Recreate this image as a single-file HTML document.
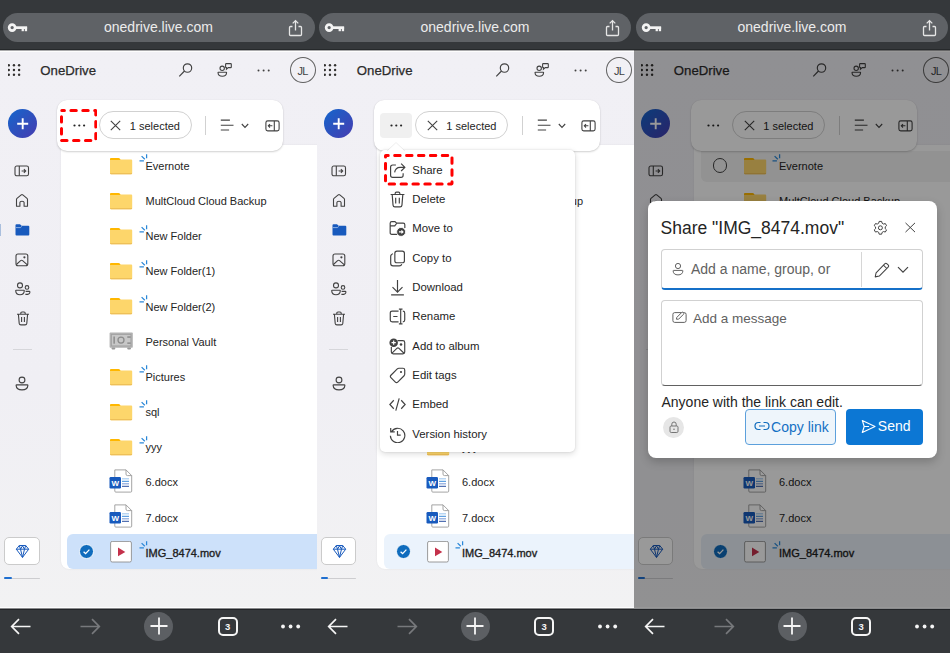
<!DOCTYPE html><html><head><meta charset="utf-8"><style>
*{margin:0;padding:0;box-sizing:border-box}
html,body{width:950px;height:653px;overflow:hidden;background:#35383b}
body{position:relative;font-family:"Liberation Sans",sans-serif;}
.abs{position:absolute}
.panel{position:absolute;top:0;width:317px;height:653px;overflow:hidden}
.top{position:absolute;left:0;top:0;width:317px;height:50px;background:#35383b}
.pill{position:absolute;left:2.5px;top:12.5px;width:312px;height:29.5px;border-radius:15px;background:#5f6266}
.pill .abs{}
.url{position:absolute;left:101.5px;top:6.5px;font-size:14px;color:#ececec;white-space:nowrap;letter-spacing:0}
.pill svg{margin-top:-12.5px;margin-left:-2.5px}
.page{position:absolute;left:0;top:50px;width:317px;height:558px;background:linear-gradient(#f1f0f5,#f0eff4 60%,#f2f2f3);overflow:hidden}
.inner{position:absolute;left:0;top:-50px;width:317px;height:653px}
.bot{position:absolute;left:0;top:608px;width:317px;height:45px;background:#35383b}
.od{left:40.3px;top:62.6px;font-size:13.2px;color:#2b2b2b;-webkit-text-stroke:0.25px #2b2b2b;white-space:nowrap}
.avatar{left:289.6px;top:56.6px;width:26.3px;height:26.4px;border:1.3px solid #616161;border-radius:50%;font-size:11px;line-height:26px;text-align:center;color:#424242;letter-spacing:-0.9px;text-indent:-0.6px}
.fab{left:7.5px;top:108.9px;width:29.4px;height:29.4px;border-radius:50%;background:linear-gradient(135deg,#1466cc,#473cb0)}
.fab svg{display:block}
.diamond{left:4.2px;top:537.3px;width:35.8px;height:27.3px;border:1.2px solid #cbcbcb;border-radius:5px;background:#fff}
.diamond svg{position:absolute;left:-1px;top:-1px}
.listcard{left:60.8px;top:145px;width:270px;height:423.5px;background:#fff;border-radius:0 0 0 8px;box-shadow:0 0 2px rgba(0,0,0,0.08)}
.selrow{left:67px;top:534px;width:260px;height:34.5px;background:#cde1fa;border-radius:6px 0 0 6px}
.check{left:79px;top:544px}
.check svg{display:block}
.rowtxt{left:145.5px;font-size:11px;color:#242424;white-space:nowrap;line-height:16px}
.tbcard{left:57.2px;top:99.6px;width:226.2px;height:51.8px;background:#fff;border-radius:10px;box-shadow:0 1px 2px rgba(0,0,0,0.18),0 0 1px rgba(0,0,0,0.1)}
.selpill{left:98.8px;top:111.3px;width:93px;height:28px;border:1px solid #d1d1d1;border-radius:14px;background:#fff}
.seltxt{left:129.8px;top:119.6px;font-size:11px;color:#242424;white-space:nowrap;line-height:13px}
.menu{left:63px;top:150px;width:195px;height:301.5px;background:#fff;border-radius:5px;box-shadow:0 2px 6px rgba(0,0,0,0.14),0 0 2px rgba(0,0,0,0.12)}
.mtxt{left:95.8px;font-size:11.4px;color:#242424;white-space:nowrap;line-height:16px}
.tabs{left:217.8px;top:9px;width:19.8px;height:19px;border:2px solid #f5f5f5;border-radius:5px;color:#f5f5f5;font-size:9.5px;font-weight:bold;line-height:15px;text-align:center}
.overlay{left:0;top:0;width:317px;height:558px;background:rgba(0,0,0,0.4)}
.dlg{left:14px;top:151px;width:289px;height:256.5px;background:#fff;border-radius:8px;box-shadow:0 4px 10px rgba(0,0,0,0.2)}
.dtitle{left:13px;top:17px;font-size:17.5px;color:#242424;white-space:nowrap}
.dinput{left:13.5px;top:47.8px;width:261.5px;height:41px;border:1px solid #d1d1d1;border-bottom:2px solid #1570c8;border-radius:4px}
.dph{color:#616161;white-space:nowrap}
.dmsg{left:13px;top:98.5px;width:262px;height:86px;border:1px solid #d1d1d1;border-bottom:1px solid #616161;border-radius:4px}
.copybtn{left:97px;top:208px;width:91px;height:35.5px;border:1.2px solid #5ca0dc;border-radius:4px;background:#eef5fb}
.sendbtn{left:198px;top:208px;width:77.5px;height:35.5px;border-radius:4px;background:#0c77d4}
</style></head><body><div class="panel" style="left:0px"><div class="top"><div class="pill"><svg class="abs" style="left:6px;top:21px" width="24" height="14" viewBox="0 0 24 14">
<circle cx="6.15" cy="6.6" r="3" fill="none" stroke="#f4f4f4" stroke-width="2.7"/>
<rect x="8.8" y="5.3" width="12.3" height="2.7" fill="#f4f4f4"/>
<rect x="15.6" y="6" width="2.3" height="4.2" fill="#f4f4f4"/>
<rect x="18.8" y="6" width="2.3" height="4.2" fill="#f4f4f4"/>
</svg><div class="url">onedrive.live.com</div><svg class="abs" style="left:287px;top:19px" width="17" height="18" viewBox="0 0 17 18">
<path d="M5.5 7.5H3.5Q2.5 7.5 2.5 8.5V15.5Q2.5 16.5 3.5 16.5H13.5Q14.5 16.5 14.5 15.5V8.5Q14.5 7.5 13.5 7.5H11.5" fill="none" stroke="#e6e6e6" stroke-width="1.3"/>
<path d="M8.5 11.5V1.8M5.7 4.4L8.5 1.6L11.3 4.4" fill="none" stroke="#e6e6e6" stroke-width="1.3"/>
</svg></div></div><div class="page"><div class="inner"><svg class="abs" style="left:7.6px;top:63.5px" width="13" height="13" viewBox="0 0 13 13"><circle cx="0.80" cy="1.20" r="1.2" fill="#323130"/><circle cx="5.95" cy="1.20" r="1.2" fill="#323130"/><circle cx="11.10" cy="1.20" r="1.2" fill="#323130"/><circle cx="0.80" cy="6.00" r="1.2" fill="#323130"/><circle cx="5.95" cy="6.00" r="1.2" fill="#323130"/><circle cx="11.10" cy="6.00" r="1.2" fill="#323130"/><circle cx="0.80" cy="10.80" r="1.2" fill="#323130"/><circle cx="5.95" cy="10.80" r="1.2" fill="#323130"/><circle cx="11.10" cy="10.80" r="1.2" fill="#323130"/></svg>
<div class="abs od">OneDrive</div>
<svg class="abs" style="left:178px;top:62px" width="16" height="16" viewBox="0 0 16 16"><circle cx="9.5" cy="6" r="4.2" fill="none" stroke="#424242" stroke-width="1.15"/><path d="M6.5 9L1.3 14.3" stroke="#424242" stroke-width="1.2"/></svg>
<svg class="abs" style="left:217px;top:62px" width="16" height="16" viewBox="0 0 16 16"><circle cx="5.2" cy="6.3" r="2.2" fill="none" stroke="#424242" stroke-width="1.1"/><path d="M1.3 10.2H9.3Q9.6 10.2 9.6 10.5Q9.4 14.3 5.3 14.3Q1.2 14.3 1 10.5Q1 10.2 1.3 10.2Z" fill="none" stroke="#424242" stroke-width="1.1"/><path d="M9.3 1.6H13.6Q14.3 1.6 14.3 2.3V4.9Q14.3 5.6 13.6 5.6H11.2L9.4 7.3V5.6Q8.6 5.6 8.6 4.9V2.3Q8.6 1.6 9.3 1.6Z" fill="none" stroke="#424242" stroke-width="1.1"/></svg>
<svg class="abs" style="left:257.3px;top:69px" width="14" height="3" viewBox="0 0 14 3"><circle cx="1.5" cy="1.5" r="1" fill="#424242"/><circle cx="6.6" cy="1.5" r="1" fill="#424242"/><circle cx="11.7" cy="1.5" r="1" fill="#424242"/></svg>
<div class="abs avatar">JL</div><div class="abs fab"><svg width="29.4" height="29.4" viewBox="0 0 29.4 29.4"><path d="M14.7 9.2V20.2M9.2 14.7H20.2" stroke="#fff" stroke-width="1.9"/></svg></div>
<svg class="abs" style="left:14px;top:165px" width="16" height="12" viewBox="0 0 16 12"><rect x="1" y="1" width="13.5" height="9.8" rx="1.8" fill="none" stroke="#424242" stroke-width="1.1"/><path d="M5.3 1V10.8" stroke="#424242" stroke-width="1.1"/><path d="M7.6 6H11.6M9.9 4.2L11.7 6L9.9 7.8" fill="none" stroke="#424242" stroke-width="1.1"/></svg>
<svg class="abs" style="left:15px;top:192.5px" width="14" height="15" viewBox="0 0 14 15"><path d="M1.5 13.3V6.6Q1.5 5.9 2 5.4L6.2 1.9Q7 1.3 7.8 1.9L12 5.4Q12.5 5.9 12.5 6.6V13.3H9.1V9.6Q9.1 8.3 7 8.3Q4.9 8.3 4.9 9.6V13.3Z" fill="none" stroke="#424242" stroke-width="1.1" stroke-linejoin="round"/></svg>
<svg class="abs" style="left:15px;top:224px" width="15" height="12" viewBox="0 0 15 12"><path d="M0.5 1.3Q0.5 0.3 1.5 0.3H5L6.6 1.8H13.3Q14.3 1.8 14.3 2.8V10.4Q14.3 11.4 13.3 11.4H1.5Q0.5 11.4 0.5 10.4Z" fill="#185abd"/><path d="M0.8 3.6H5.4L6.8 2.4" stroke="#a8c5ef" stroke-width="0.8" fill="none"/></svg>
<svg class="abs" style="left:15px;top:253px" width="14" height="14" viewBox="0 0 14 14"><rect x="1" y="1" width="11.8" height="11.8" rx="2" fill="none" stroke="#424242" stroke-width="1.1"/><path d="M1.4 11.5L5.6 7.6Q6.6 6.8 7.6 7.6L12.4 11.8" fill="none" stroke="#424242" stroke-width="1.1"/><circle cx="9.4" cy="4.3" r="1.1" fill="#424242"/></svg>
<svg class="abs" style="left:14.5px;top:282px" width="16" height="14" viewBox="0 0 16 14"><circle cx="5" cy="3.4" r="2.5" fill="none" stroke="#424242" stroke-width="1.1"/><path d="M1.1 8.3H8.9Q9.3 8.3 9.3 8.7Q9.1 12.7 5 12.7Q0.9 12.7 0.7 8.7Q0.7 8.3 1.1 8.3Z" fill="none" stroke="#424242" stroke-width="1.1"/><circle cx="12" cy="5.4" r="1.8" fill="none" stroke="#424242" stroke-width="1.1"/><path d="M10.4 12.4Q14.8 12.6 14.9 10.2Q14.9 9.4 14.2 9.4H10.6" fill="none" stroke="#424242" stroke-width="1.1"/></svg>
<svg class="abs" style="left:15.5px;top:310.5px" width="14" height="15" viewBox="0 0 14 15"><path d="M1 3.3H13M4.8 3.3V2.2Q4.8 1 6 1H8Q9.2 1 9.2 2.2V3.3M2.4 3.3L3.2 12.4Q3.4 13.9 4.9 13.9H9.1Q10.6 13.9 10.8 12.4L11.6 3.3M5.6 6V11M8.4 6V11" fill="none" stroke="#424242" stroke-width="1.1"/></svg>
<div class="abs" style="left:12.5px;top:348.5px;width:19px;height:1px;background:#d6d6da"></div>
<svg class="abs" style="left:15px;top:376px" width="14" height="15" viewBox="0 0 14 15"><circle cx="7" cy="4" r="2.9" fill="none" stroke="#424242" stroke-width="1.1"/><path d="M1.6 8.9H12.4Q12.9 8.9 12.9 9.4Q12.6 13.9 7 13.9Q1.4 13.9 1.1 9.4Q1.1 8.9 1.6 8.9Z" fill="none" stroke="#424242" stroke-width="1.1"/></svg>
<div class="abs diamond"></div>
<svg class="abs" style="left:15px;top:544px" width="15" height="15" viewBox="0 0 15 15"><path d="M4.3 1.5H10.7L13.7 5.2L7.5 13.4L1.3 5.2Z M1.3 5.2H13.7 M5.5 5.2L7.5 13.4L9.5 5.2 M4.3 1.5L5.5 5.2L7.5 1.8L9.5 5.2L10.7 1.5" fill="none" stroke="#185abd" stroke-width="1" stroke-linejoin="round"/></svg>
<div class="abs" style="left:4.2px;top:577.7px;width:35.8px;height:1.4px;background:#cdcdd0;border-radius:1px"></div>
<div class="abs" style="left:4.2px;top:577.4px;width:7.6px;height:2px;background:#1f6fd0;border-radius:1px"></div><div class="abs listcard"></div>
<div class="abs selrow"></div>
<div class="abs check"><svg width="15" height="15" viewBox="0 0 15 15"><circle cx="7.5" cy="7.5" r="7" fill="#0f6cbd" stroke="#fff" stroke-width="0.9"/><path d="M4.6 7.7L6.6 9.6L10.4 5.6" fill="none" stroke="#fff" stroke-width="1.3"/></svg></div>
<svg class="abs" style="left:109px;top:156.70000000000002px" width="25" height="18" viewBox="0 0 25 18"><path d="M1 2.3Q1 1 2.3 1H9.3Q10.2 1 10.8 1.8L11.3 2.6H22.2Q23.2 2.6 23.2 3.6V15.9Q23.2 17.2 22 17.2H2.2Q1 17.2 1 16Z" fill="#fdd66b"/><path d="M1 2.3Q1 1 2.3 1H9.3Q10.2 1 10.8 1.8L11.6 3H1Z" fill="#ffb700"/><path d="M1 16.3H23.2V16.3Q23.2 17.3 22.1 17.3H2.1Q1 17.3 1 16.3Z" fill="#e9b852"/></svg>
<svg class="abs" style="left:138.5px;top:154.3px" width="9" height="8" viewBox="0 0 9 8"><path d="M0.5 6.9H4.9M2.6 2.1L5.8 5.2M7.6 0.3V4.2" stroke="#2b88d8" stroke-width="1.25"/></svg>
<div class="abs rowtxt" style="top:158.0px">Evernote</div>
<svg class="abs" style="left:109px;top:191.85000000000002px" width="25" height="18" viewBox="0 0 25 18"><path d="M1 2.3Q1 1 2.3 1H9.3Q10.2 1 10.8 1.8L11.3 2.6H22.2Q23.2 2.6 23.2 3.6V15.9Q23.2 17.2 22 17.2H2.2Q1 17.2 1 16Z" fill="#fdd66b"/><path d="M1 2.3Q1 1 2.3 1H9.3Q10.2 1 10.8 1.8L11.6 3H1Z" fill="#ffb700"/><path d="M1 16.3H23.2V16.3Q23.2 17.3 22.1 17.3H2.1Q1 17.3 1 16.3Z" fill="#e9b852"/></svg>
<div class="abs rowtxt" style="top:193.2px">MultCloud Cloud Backup</div>
<svg class="abs" style="left:109px;top:227.00000000000003px" width="25" height="18" viewBox="0 0 25 18"><path d="M1 2.3Q1 1 2.3 1H9.3Q10.2 1 10.8 1.8L11.3 2.6H22.2Q23.2 2.6 23.2 3.6V15.9Q23.2 17.2 22 17.2H2.2Q1 17.2 1 16Z" fill="#fdd66b"/><path d="M1 2.3Q1 1 2.3 1H9.3Q10.2 1 10.8 1.8L11.6 3H1Z" fill="#ffb700"/><path d="M1 16.3H23.2V16.3Q23.2 17.3 22.1 17.3H2.1Q1 17.3 1 16.3Z" fill="#e9b852"/></svg>
<svg class="abs" style="left:138.5px;top:224.60000000000002px" width="9" height="8" viewBox="0 0 9 8"><path d="M0.5 6.9H4.9M2.6 2.1L5.8 5.2M7.6 0.3V4.2" stroke="#2b88d8" stroke-width="1.25"/></svg>
<div class="abs rowtxt" style="top:228.3px">New Folder</div>
<svg class="abs" style="left:109px;top:262.15px" width="25" height="18" viewBox="0 0 25 18"><path d="M1 2.3Q1 1 2.3 1H9.3Q10.2 1 10.8 1.8L11.3 2.6H22.2Q23.2 2.6 23.2 3.6V15.9Q23.2 17.2 22 17.2H2.2Q1 17.2 1 16Z" fill="#fdd66b"/><path d="M1 2.3Q1 1 2.3 1H9.3Q10.2 1 10.8 1.8L11.6 3H1Z" fill="#ffb700"/><path d="M1 16.3H23.2V16.3Q23.2 17.3 22.1 17.3H2.1Q1 17.3 1 16.3Z" fill="#e9b852"/></svg>
<svg class="abs" style="left:138.5px;top:259.75px" width="9" height="8" viewBox="0 0 9 8"><path d="M0.5 6.9H4.9M2.6 2.1L5.8 5.2M7.6 0.3V4.2" stroke="#2b88d8" stroke-width="1.25"/></svg>
<div class="abs rowtxt" style="top:263.4px">New Folder(1)</div>
<svg class="abs" style="left:109px;top:297.29999999999995px" width="25" height="18" viewBox="0 0 25 18"><path d="M1 2.3Q1 1 2.3 1H9.3Q10.2 1 10.8 1.8L11.3 2.6H22.2Q23.2 2.6 23.2 3.6V15.9Q23.2 17.2 22 17.2H2.2Q1 17.2 1 16Z" fill="#fdd66b"/><path d="M1 2.3Q1 1 2.3 1H9.3Q10.2 1 10.8 1.8L11.6 3H1Z" fill="#ffb700"/><path d="M1 16.3H23.2V16.3Q23.2 17.3 22.1 17.3H2.1Q1 17.3 1 16.3Z" fill="#e9b852"/></svg>
<svg class="abs" style="left:138.5px;top:294.9px" width="9" height="8" viewBox="0 0 9 8"><path d="M0.5 6.9H4.9M2.6 2.1L5.8 5.2M7.6 0.3V4.2" stroke="#2b88d8" stroke-width="1.25"/></svg>
<div class="abs rowtxt" style="top:298.6px">New Folder(2)</div>
<svg class="abs" style="left:109px;top:331.55px" width="25" height="19" viewBox="0 0 25 19"><rect x="0.6" y="0.6" width="23.2" height="15.2" rx="0.8" fill="#b1b1b1"/><rect x="2.5" y="2.5" width="19.4" height="11.4" fill="#c7c7c7" stroke="#a0a0a0" stroke-width="0.8"/><rect x="4.4" y="4.5" width="1.5" height="7.2" fill="#8c8c8c"/><circle cx="12" cy="8.1" r="3" fill="none" stroke="#8c8c8c" stroke-width="1.3"/><rect x="18.3" y="4.3" width="3.4" height="1.5" fill="#8c8c8c"/><rect x="18.3" y="10.4" width="3.4" height="1.5" fill="#8c8c8c"/><rect x="2.5" y="15.6" width="3.8" height="1.8" rx="0.8" fill="#9a9a9a"/><rect x="18.2" y="15.6" width="3.8" height="1.8" rx="0.8" fill="#9a9a9a"/></svg>
<div class="abs rowtxt" style="top:333.8px">Personal Vault</div>
<svg class="abs" style="left:109px;top:367.59999999999997px" width="25" height="18" viewBox="0 0 25 18"><path d="M1 2.3Q1 1 2.3 1H9.3Q10.2 1 10.8 1.8L11.3 2.6H22.2Q23.2 2.6 23.2 3.6V15.9Q23.2 17.2 22 17.2H2.2Q1 17.2 1 16Z" fill="#fdd66b"/><path d="M1 2.3Q1 1 2.3 1H9.3Q10.2 1 10.8 1.8L11.6 3H1Z" fill="#ffb700"/><path d="M1 16.3H23.2V16.3Q23.2 17.3 22.1 17.3H2.1Q1 17.3 1 16.3Z" fill="#e9b852"/></svg>
<svg class="abs" style="left:138.5px;top:365.2px" width="9" height="8" viewBox="0 0 9 8"><path d="M0.5 6.9H4.9M2.6 2.1L5.8 5.2M7.6 0.3V4.2" stroke="#2b88d8" stroke-width="1.25"/></svg>
<div class="abs rowtxt" style="top:368.9px">Pictures</div>
<svg class="abs" style="left:109px;top:402.75px" width="25" height="18" viewBox="0 0 25 18"><path d="M1 2.3Q1 1 2.3 1H9.3Q10.2 1 10.8 1.8L11.3 2.6H22.2Q23.2 2.6 23.2 3.6V15.9Q23.2 17.2 22 17.2H2.2Q1 17.2 1 16Z" fill="#fdd66b"/><path d="M1 2.3Q1 1 2.3 1H9.3Q10.2 1 10.8 1.8L11.6 3H1Z" fill="#ffb700"/><path d="M1 16.3H23.2V16.3Q23.2 17.3 22.1 17.3H2.1Q1 17.3 1 16.3Z" fill="#e9b852"/></svg>
<svg class="abs" style="left:138.5px;top:400.35px" width="9" height="8" viewBox="0 0 9 8"><path d="M0.5 6.9H4.9M2.6 2.1L5.8 5.2M7.6 0.3V4.2" stroke="#2b88d8" stroke-width="1.25"/></svg>
<div class="abs rowtxt" style="top:404.1px">sql</div>
<svg class="abs" style="left:109px;top:437.9px" width="25" height="18" viewBox="0 0 25 18"><path d="M1 2.3Q1 1 2.3 1H9.3Q10.2 1 10.8 1.8L11.3 2.6H22.2Q23.2 2.6 23.2 3.6V15.9Q23.2 17.2 22 17.2H2.2Q1 17.2 1 16Z" fill="#fdd66b"/><path d="M1 2.3Q1 1 2.3 1H9.3Q10.2 1 10.8 1.8L11.6 3H1Z" fill="#ffb700"/><path d="M1 16.3H23.2V16.3Q23.2 17.3 22.1 17.3H2.1Q1 17.3 1 16.3Z" fill="#e9b852"/></svg>
<svg class="abs" style="left:138.5px;top:435.5px" width="9" height="8" viewBox="0 0 9 8"><path d="M0.5 6.9H4.9M2.6 2.1L5.8 5.2M7.6 0.3V4.2" stroke="#2b88d8" stroke-width="1.25"/></svg>
<div class="abs rowtxt" style="top:439.2px">yyy</div>
<svg class="abs" style="left:109px;top:469.15px" width="25" height="25" viewBox="0 0 25 25"><path d="M5.8 0.9H17L22.7 6.6V22.1Q22.7 23.1 21.7 23.1H6.8Q5.8 23.1 5.8 22.1Z" fill="#fff" stroke="#9a9a9a" stroke-width="0.9"/><path d="M17 0.9V5.1Q17 6.6 18.5 6.6H22.7" fill="none" stroke="#9a9a9a" stroke-width="0.9"/><rect x="13" y="9.2" width="7" height="1.2" fill="#a9cdf0"/><rect x="13" y="11.8" width="7" height="1" fill="#3b8ad9"/><rect x="13" y="14.2" width="7" height="1.2" fill="#8aa7dc"/><rect x="13" y="16.8" width="7" height="1" fill="#2a4fa0"/><rect x="0.5" y="8" width="11.5" height="11.4" rx="1.2" fill="#185abd"/><text x="6.2" y="16.6" font-family="Liberation Sans" font-size="8" font-weight="bold" fill="#fff" text-anchor="middle">W</text></svg>
<div class="abs rowtxt" style="top:474.3px">6.docx</div>
<svg class="abs" style="left:109px;top:504.29999999999995px" width="25" height="25" viewBox="0 0 25 25"><path d="M5.8 0.9H17L22.7 6.6V22.1Q22.7 23.1 21.7 23.1H6.8Q5.8 23.1 5.8 22.1Z" fill="#fff" stroke="#9a9a9a" stroke-width="0.9"/><path d="M17 0.9V5.1Q17 6.6 18.5 6.6H22.7" fill="none" stroke="#9a9a9a" stroke-width="0.9"/><rect x="13" y="9.2" width="7" height="1.2" fill="#a9cdf0"/><rect x="13" y="11.8" width="7" height="1" fill="#3b8ad9"/><rect x="13" y="14.2" width="7" height="1.2" fill="#8aa7dc"/><rect x="13" y="16.8" width="7" height="1" fill="#2a4fa0"/><rect x="0.5" y="8" width="11.5" height="11.4" rx="1.2" fill="#185abd"/><text x="6.2" y="16.6" font-family="Liberation Sans" font-size="8" font-weight="bold" fill="#fff" text-anchor="middle">W</text></svg>
<div class="abs rowtxt" style="top:509.5px">7.docx</div>
<svg class="abs" style="left:110px;top:540.95px" width="22" height="22" viewBox="0 0 22 22"><rect x="0.6" y="0.4" width="20.8" height="20.6" rx="1.6" fill="#fff" stroke="#8f8f8f" stroke-width="0.9"/><path d="M8 6.4L15.3 11.1L8 15.3Z" fill="#c4314b"/></svg>
<svg class="abs" style="left:138.5px;top:540.95px" width="9" height="8" viewBox="0 0 9 8"><path d="M0.5 6.9H4.9M2.6 2.1L5.8 5.2M7.6 0.3V4.2" stroke="#2b88d8" stroke-width="1.25"/></svg>
<div class="abs rowtxt" style="top:544.7px;-webkit-text-stroke:0.35px #242424;color:#1a1a1a">IMG_8474.mov</div><div class="abs tbcard"></div><svg class="abs" style="left:73px;top:123.5px" width="13" height="3" viewBox="0 0 13 3"><circle cx="1.5" cy="1.5" r="1.1" fill="#242424"/><circle cx="6.3" cy="1.5" r="1.1" fill="#242424"/><circle cx="11.1" cy="1.5" r="1.1" fill="#242424"/></svg>
<div class="abs selpill"></div>
<svg class="abs" style="left:110px;top:119.5px" width="11" height="11" viewBox="0 0 11 11"><path d="M0.8 0.8L10.2 10.2M10.2 0.8L0.8 10.2" stroke="#424242" stroke-width="1.1"/></svg>
<div class="abs seltxt">1 selected</div>
<div class="abs" style="left:205px;top:116px;width:1px;height:19px;background:#d1d1d1"></div>
<svg class="abs" style="left:220px;top:119px" width="15" height="13" viewBox="0 0 15 13"><path d="M0.8 1.1H9.9M0.8 6.2H13.5M0.8 11H9.1" stroke="#424242" stroke-width="1.1"/></svg>
<svg class="abs" style="left:241px;top:123px" width="8" height="6" viewBox="0 0 8 6"><path d="M0.8 1L4 4.4L7.2 1" fill="none" stroke="#424242" stroke-width="1.1"/></svg>
<svg class="abs" style="left:264.7px;top:119.5px" width="15" height="12" viewBox="0 0 15 12"><rect x="0.9" y="0.9" width="13.2" height="10" rx="1.8" fill="none" stroke="#424242" stroke-width="1.1"/><path d="M9.3 0.9V10.9" stroke="#424242" stroke-width="1.1"/><path d="M7.4 5.8H3.4M5 4.1L3.3 5.8L5 7.5" fill="none" stroke="#424242" stroke-width="1.1"/></svg><div class="abs" style="left:0;top:224px;width:1.2px;height:12px;background:#aabfdd"></div><svg class="abs" style="left:60px;top:109px" width="37.3" height="33" viewBox="0 0 37.3 33"><rect x="1.5" y="1.5" width="34.3" height="30" rx="0.3" fill="none" stroke="#ff0000" stroke-width="3" stroke-linecap="round" stroke-dasharray="5.4 6.5" stroke-dashoffset="2.8"/></svg><div class="abs" style="left:0;top:50px;width:317px;height:1px;background:#a9a9ab"></div><div class="abs" style="left:0;top:51px;width:317px;height:1px;background:#fdfdfd"></div><div class="abs" style="left:0;top:607px;width:317px;height:1px;background:#fdfdfd"></div></div></div><div class="bot">
<svg class="abs" style="left:10px;top:10px" width="22" height="17" viewBox="0 0 22 17"><path d="M20.5 8.5H2M9 1.2L1.7 8.5L9 15.8" fill="none" stroke="#f5f5f5" stroke-width="1.7"/></svg>
<svg class="abs" style="left:79px;top:10px" width="22" height="17" viewBox="0 0 22 17"><path d="M1.5 8.5H20M13 1.2L20.3 8.5L13 15.8" fill="none" stroke="#77797c" stroke-width="1.7"/></svg>
<div class="abs" style="left:144px;top:3.5px;width:29px;height:29px;border-radius:50%;background:#5c5f63"></div>
<svg class="abs" style="left:148.5px;top:8px" width="20" height="20" viewBox="0 0 20 20"><path d="M10 1.5V18.5M1.5 10H18.5" stroke="#f5f5f5" stroke-width="1.8"/></svg>
<div class="abs tabs">3</div>
<svg class="abs" style="left:280px;top:16px" width="21" height="5" viewBox="0 0 21 5"><circle cx="3" cy="2.5" r="1.9" fill="#f5f5f5"/><circle cx="10.6" cy="2.5" r="1.9" fill="#f5f5f5"/><circle cx="18.2" cy="2.5" r="1.9" fill="#f5f5f5"/></svg>
</div><div class="abs" style="left:0;top:49px;width:317px;height:1px;background:#26292b"></div><div class="abs" style="left:0;top:608px;width:317px;height:1px;background:#8a8b8d"></div><div class="abs" style="left:0;top:609px;width:317px;height:1px;background:#222427"></div></div><div class="panel" style="left:316.5px"><div class="top"><div class="pill"><svg class="abs" style="left:6px;top:21px" width="24" height="14" viewBox="0 0 24 14">
<circle cx="6.15" cy="6.6" r="3" fill="none" stroke="#f4f4f4" stroke-width="2.7"/>
<rect x="8.8" y="5.3" width="12.3" height="2.7" fill="#f4f4f4"/>
<rect x="15.6" y="6" width="2.3" height="4.2" fill="#f4f4f4"/>
<rect x="18.8" y="6" width="2.3" height="4.2" fill="#f4f4f4"/>
</svg><div class="url">onedrive.live.com</div><svg class="abs" style="left:287px;top:19px" width="17" height="18" viewBox="0 0 17 18">
<path d="M5.5 7.5H3.5Q2.5 7.5 2.5 8.5V15.5Q2.5 16.5 3.5 16.5H13.5Q14.5 16.5 14.5 15.5V8.5Q14.5 7.5 13.5 7.5H11.5" fill="none" stroke="#e6e6e6" stroke-width="1.3"/>
<path d="M8.5 11.5V1.8M5.7 4.4L8.5 1.6L11.3 4.4" fill="none" stroke="#e6e6e6" stroke-width="1.3"/>
</svg></div></div><div class="page"><div class="inner"><svg class="abs" style="left:7.6px;top:63.5px" width="13" height="13" viewBox="0 0 13 13"><circle cx="0.80" cy="1.20" r="1.2" fill="#323130"/><circle cx="5.95" cy="1.20" r="1.2" fill="#323130"/><circle cx="11.10" cy="1.20" r="1.2" fill="#323130"/><circle cx="0.80" cy="6.00" r="1.2" fill="#323130"/><circle cx="5.95" cy="6.00" r="1.2" fill="#323130"/><circle cx="11.10" cy="6.00" r="1.2" fill="#323130"/><circle cx="0.80" cy="10.80" r="1.2" fill="#323130"/><circle cx="5.95" cy="10.80" r="1.2" fill="#323130"/><circle cx="11.10" cy="10.80" r="1.2" fill="#323130"/></svg>
<div class="abs od">OneDrive</div>
<svg class="abs" style="left:178px;top:62px" width="16" height="16" viewBox="0 0 16 16"><circle cx="9.5" cy="6" r="4.2" fill="none" stroke="#424242" stroke-width="1.15"/><path d="M6.5 9L1.3 14.3" stroke="#424242" stroke-width="1.2"/></svg>
<svg class="abs" style="left:217px;top:62px" width="16" height="16" viewBox="0 0 16 16"><circle cx="5.2" cy="6.3" r="2.2" fill="none" stroke="#424242" stroke-width="1.1"/><path d="M1.3 10.2H9.3Q9.6 10.2 9.6 10.5Q9.4 14.3 5.3 14.3Q1.2 14.3 1 10.5Q1 10.2 1.3 10.2Z" fill="none" stroke="#424242" stroke-width="1.1"/><path d="M9.3 1.6H13.6Q14.3 1.6 14.3 2.3V4.9Q14.3 5.6 13.6 5.6H11.2L9.4 7.3V5.6Q8.6 5.6 8.6 4.9V2.3Q8.6 1.6 9.3 1.6Z" fill="none" stroke="#424242" stroke-width="1.1"/></svg>
<svg class="abs" style="left:257.3px;top:69px" width="14" height="3" viewBox="0 0 14 3"><circle cx="1.5" cy="1.5" r="1" fill="#424242"/><circle cx="6.6" cy="1.5" r="1" fill="#424242"/><circle cx="11.7" cy="1.5" r="1" fill="#424242"/></svg>
<div class="abs avatar">JL</div><div class="abs fab"><svg width="29.4" height="29.4" viewBox="0 0 29.4 29.4"><path d="M14.7 9.2V20.2M9.2 14.7H20.2" stroke="#fff" stroke-width="1.9"/></svg></div>
<svg class="abs" style="left:14px;top:165px" width="16" height="12" viewBox="0 0 16 12"><rect x="1" y="1" width="13.5" height="9.8" rx="1.8" fill="none" stroke="#424242" stroke-width="1.1"/><path d="M5.3 1V10.8" stroke="#424242" stroke-width="1.1"/><path d="M7.6 6H11.6M9.9 4.2L11.7 6L9.9 7.8" fill="none" stroke="#424242" stroke-width="1.1"/></svg>
<svg class="abs" style="left:15px;top:192.5px" width="14" height="15" viewBox="0 0 14 15"><path d="M1.5 13.3V6.6Q1.5 5.9 2 5.4L6.2 1.9Q7 1.3 7.8 1.9L12 5.4Q12.5 5.9 12.5 6.6V13.3H9.1V9.6Q9.1 8.3 7 8.3Q4.9 8.3 4.9 9.6V13.3Z" fill="none" stroke="#424242" stroke-width="1.1" stroke-linejoin="round"/></svg>
<svg class="abs" style="left:15px;top:224px" width="15" height="12" viewBox="0 0 15 12"><path d="M0.5 1.3Q0.5 0.3 1.5 0.3H5L6.6 1.8H13.3Q14.3 1.8 14.3 2.8V10.4Q14.3 11.4 13.3 11.4H1.5Q0.5 11.4 0.5 10.4Z" fill="#185abd"/><path d="M0.8 3.6H5.4L6.8 2.4" stroke="#a8c5ef" stroke-width="0.8" fill="none"/></svg>
<svg class="abs" style="left:15px;top:253px" width="14" height="14" viewBox="0 0 14 14"><rect x="1" y="1" width="11.8" height="11.8" rx="2" fill="none" stroke="#424242" stroke-width="1.1"/><path d="M1.4 11.5L5.6 7.6Q6.6 6.8 7.6 7.6L12.4 11.8" fill="none" stroke="#424242" stroke-width="1.1"/><circle cx="9.4" cy="4.3" r="1.1" fill="#424242"/></svg>
<svg class="abs" style="left:14.5px;top:282px" width="16" height="14" viewBox="0 0 16 14"><circle cx="5" cy="3.4" r="2.5" fill="none" stroke="#424242" stroke-width="1.1"/><path d="M1.1 8.3H8.9Q9.3 8.3 9.3 8.7Q9.1 12.7 5 12.7Q0.9 12.7 0.7 8.7Q0.7 8.3 1.1 8.3Z" fill="none" stroke="#424242" stroke-width="1.1"/><circle cx="12" cy="5.4" r="1.8" fill="none" stroke="#424242" stroke-width="1.1"/><path d="M10.4 12.4Q14.8 12.6 14.9 10.2Q14.9 9.4 14.2 9.4H10.6" fill="none" stroke="#424242" stroke-width="1.1"/></svg>
<svg class="abs" style="left:15.5px;top:310.5px" width="14" height="15" viewBox="0 0 14 15"><path d="M1 3.3H13M4.8 3.3V2.2Q4.8 1 6 1H8Q9.2 1 9.2 2.2V3.3M2.4 3.3L3.2 12.4Q3.4 13.9 4.9 13.9H9.1Q10.6 13.9 10.8 12.4L11.6 3.3M5.6 6V11M8.4 6V11" fill="none" stroke="#424242" stroke-width="1.1"/></svg>
<div class="abs" style="left:12.5px;top:348.5px;width:19px;height:1px;background:#d6d6da"></div>
<svg class="abs" style="left:15px;top:376px" width="14" height="15" viewBox="0 0 14 15"><circle cx="7" cy="4" r="2.9" fill="none" stroke="#424242" stroke-width="1.1"/><path d="M1.6 8.9H12.4Q12.9 8.9 12.9 9.4Q12.6 13.9 7 13.9Q1.4 13.9 1.1 9.4Q1.1 8.9 1.6 8.9Z" fill="none" stroke="#424242" stroke-width="1.1"/></svg>
<div class="abs diamond"></div>
<svg class="abs" style="left:15px;top:544px" width="15" height="15" viewBox="0 0 15 15"><path d="M4.3 1.5H10.7L13.7 5.2L7.5 13.4L1.3 5.2Z M1.3 5.2H13.7 M5.5 5.2L7.5 13.4L9.5 5.2 M4.3 1.5L5.5 5.2L7.5 1.8L9.5 5.2L10.7 1.5" fill="none" stroke="#185abd" stroke-width="1" stroke-linejoin="round"/></svg>
<div class="abs" style="left:4.2px;top:577.7px;width:35.8px;height:1.4px;background:#cdcdd0;border-radius:1px"></div>
<div class="abs" style="left:4.2px;top:577.4px;width:7.6px;height:2px;background:#1f6fd0;border-radius:1px"></div><div class="abs listcard"></div>
<div class="abs selrow" style="background:#ebf3fc"></div>
<div class="abs check"><svg width="15" height="15" viewBox="0 0 15 15"><circle cx="7.5" cy="7.5" r="7" fill="#0f6cbd" stroke="#fff" stroke-width="0.9"/><path d="M4.6 7.7L6.6 9.6L10.4 5.6" fill="none" stroke="#fff" stroke-width="1.3"/></svg></div>
<svg class="abs" style="left:109px;top:156.70000000000002px" width="25" height="18" viewBox="0 0 25 18"><path d="M1 2.3Q1 1 2.3 1H9.3Q10.2 1 10.8 1.8L11.3 2.6H22.2Q23.2 2.6 23.2 3.6V15.9Q23.2 17.2 22 17.2H2.2Q1 17.2 1 16Z" fill="#fdd66b"/><path d="M1 2.3Q1 1 2.3 1H9.3Q10.2 1 10.8 1.8L11.6 3H1Z" fill="#ffb700"/><path d="M1 16.3H23.2V16.3Q23.2 17.3 22.1 17.3H2.1Q1 17.3 1 16.3Z" fill="#e9b852"/></svg>
<svg class="abs" style="left:138.5px;top:154.3px" width="9" height="8" viewBox="0 0 9 8"><path d="M0.5 6.9H4.9M2.6 2.1L5.8 5.2M7.6 0.3V4.2" stroke="#2b88d8" stroke-width="1.25"/></svg>
<div class="abs rowtxt" style="top:158.0px">Evernote</div>
<svg class="abs" style="left:109px;top:191.85000000000002px" width="25" height="18" viewBox="0 0 25 18"><path d="M1 2.3Q1 1 2.3 1H9.3Q10.2 1 10.8 1.8L11.3 2.6H22.2Q23.2 2.6 23.2 3.6V15.9Q23.2 17.2 22 17.2H2.2Q1 17.2 1 16Z" fill="#fdd66b"/><path d="M1 2.3Q1 1 2.3 1H9.3Q10.2 1 10.8 1.8L11.6 3H1Z" fill="#ffb700"/><path d="M1 16.3H23.2V16.3Q23.2 17.3 22.1 17.3H2.1Q1 17.3 1 16.3Z" fill="#e9b852"/></svg>
<div class="abs rowtxt" style="top:193.2px">MultCloud Cloud Backup</div>
<svg class="abs" style="left:109px;top:227.00000000000003px" width="25" height="18" viewBox="0 0 25 18"><path d="M1 2.3Q1 1 2.3 1H9.3Q10.2 1 10.8 1.8L11.3 2.6H22.2Q23.2 2.6 23.2 3.6V15.9Q23.2 17.2 22 17.2H2.2Q1 17.2 1 16Z" fill="#fdd66b"/><path d="M1 2.3Q1 1 2.3 1H9.3Q10.2 1 10.8 1.8L11.6 3H1Z" fill="#ffb700"/><path d="M1 16.3H23.2V16.3Q23.2 17.3 22.1 17.3H2.1Q1 17.3 1 16.3Z" fill="#e9b852"/></svg>
<svg class="abs" style="left:138.5px;top:224.60000000000002px" width="9" height="8" viewBox="0 0 9 8"><path d="M0.5 6.9H4.9M2.6 2.1L5.8 5.2M7.6 0.3V4.2" stroke="#2b88d8" stroke-width="1.25"/></svg>
<div class="abs rowtxt" style="top:228.3px">New Folder</div>
<svg class="abs" style="left:109px;top:262.15px" width="25" height="18" viewBox="0 0 25 18"><path d="M1 2.3Q1 1 2.3 1H9.3Q10.2 1 10.8 1.8L11.3 2.6H22.2Q23.2 2.6 23.2 3.6V15.9Q23.2 17.2 22 17.2H2.2Q1 17.2 1 16Z" fill="#fdd66b"/><path d="M1 2.3Q1 1 2.3 1H9.3Q10.2 1 10.8 1.8L11.6 3H1Z" fill="#ffb700"/><path d="M1 16.3H23.2V16.3Q23.2 17.3 22.1 17.3H2.1Q1 17.3 1 16.3Z" fill="#e9b852"/></svg>
<svg class="abs" style="left:138.5px;top:259.75px" width="9" height="8" viewBox="0 0 9 8"><path d="M0.5 6.9H4.9M2.6 2.1L5.8 5.2M7.6 0.3V4.2" stroke="#2b88d8" stroke-width="1.25"/></svg>
<div class="abs rowtxt" style="top:263.4px">New Folder(1)</div>
<svg class="abs" style="left:109px;top:297.29999999999995px" width="25" height="18" viewBox="0 0 25 18"><path d="M1 2.3Q1 1 2.3 1H9.3Q10.2 1 10.8 1.8L11.3 2.6H22.2Q23.2 2.6 23.2 3.6V15.9Q23.2 17.2 22 17.2H2.2Q1 17.2 1 16Z" fill="#fdd66b"/><path d="M1 2.3Q1 1 2.3 1H9.3Q10.2 1 10.8 1.8L11.6 3H1Z" fill="#ffb700"/><path d="M1 16.3H23.2V16.3Q23.2 17.3 22.1 17.3H2.1Q1 17.3 1 16.3Z" fill="#e9b852"/></svg>
<svg class="abs" style="left:138.5px;top:294.9px" width="9" height="8" viewBox="0 0 9 8"><path d="M0.5 6.9H4.9M2.6 2.1L5.8 5.2M7.6 0.3V4.2" stroke="#2b88d8" stroke-width="1.25"/></svg>
<div class="abs rowtxt" style="top:298.6px">New Folder(2)</div>
<svg class="abs" style="left:109px;top:331.55px" width="25" height="19" viewBox="0 0 25 19"><rect x="0.6" y="0.6" width="23.2" height="15.2" rx="0.8" fill="#b1b1b1"/><rect x="2.5" y="2.5" width="19.4" height="11.4" fill="#c7c7c7" stroke="#a0a0a0" stroke-width="0.8"/><rect x="4.4" y="4.5" width="1.5" height="7.2" fill="#8c8c8c"/><circle cx="12" cy="8.1" r="3" fill="none" stroke="#8c8c8c" stroke-width="1.3"/><rect x="18.3" y="4.3" width="3.4" height="1.5" fill="#8c8c8c"/><rect x="18.3" y="10.4" width="3.4" height="1.5" fill="#8c8c8c"/><rect x="2.5" y="15.6" width="3.8" height="1.8" rx="0.8" fill="#9a9a9a"/><rect x="18.2" y="15.6" width="3.8" height="1.8" rx="0.8" fill="#9a9a9a"/></svg>
<div class="abs rowtxt" style="top:333.8px">Personal Vault</div>
<svg class="abs" style="left:109px;top:367.59999999999997px" width="25" height="18" viewBox="0 0 25 18"><path d="M1 2.3Q1 1 2.3 1H9.3Q10.2 1 10.8 1.8L11.3 2.6H22.2Q23.2 2.6 23.2 3.6V15.9Q23.2 17.2 22 17.2H2.2Q1 17.2 1 16Z" fill="#fdd66b"/><path d="M1 2.3Q1 1 2.3 1H9.3Q10.2 1 10.8 1.8L11.6 3H1Z" fill="#ffb700"/><path d="M1 16.3H23.2V16.3Q23.2 17.3 22.1 17.3H2.1Q1 17.3 1 16.3Z" fill="#e9b852"/></svg>
<svg class="abs" style="left:138.5px;top:365.2px" width="9" height="8" viewBox="0 0 9 8"><path d="M0.5 6.9H4.9M2.6 2.1L5.8 5.2M7.6 0.3V4.2" stroke="#2b88d8" stroke-width="1.25"/></svg>
<div class="abs rowtxt" style="top:368.9px">Pictures</div>
<svg class="abs" style="left:109px;top:402.75px" width="25" height="18" viewBox="0 0 25 18"><path d="M1 2.3Q1 1 2.3 1H9.3Q10.2 1 10.8 1.8L11.3 2.6H22.2Q23.2 2.6 23.2 3.6V15.9Q23.2 17.2 22 17.2H2.2Q1 17.2 1 16Z" fill="#fdd66b"/><path d="M1 2.3Q1 1 2.3 1H9.3Q10.2 1 10.8 1.8L11.6 3H1Z" fill="#ffb700"/><path d="M1 16.3H23.2V16.3Q23.2 17.3 22.1 17.3H2.1Q1 17.3 1 16.3Z" fill="#e9b852"/></svg>
<svg class="abs" style="left:138.5px;top:400.35px" width="9" height="8" viewBox="0 0 9 8"><path d="M0.5 6.9H4.9M2.6 2.1L5.8 5.2M7.6 0.3V4.2" stroke="#2b88d8" stroke-width="1.25"/></svg>
<div class="abs rowtxt" style="top:404.1px">sql</div>
<svg class="abs" style="left:109px;top:437.9px" width="25" height="18" viewBox="0 0 25 18"><path d="M1 2.3Q1 1 2.3 1H9.3Q10.2 1 10.8 1.8L11.3 2.6H22.2Q23.2 2.6 23.2 3.6V15.9Q23.2 17.2 22 17.2H2.2Q1 17.2 1 16Z" fill="#fdd66b"/><path d="M1 2.3Q1 1 2.3 1H9.3Q10.2 1 10.8 1.8L11.6 3H1Z" fill="#ffb700"/><path d="M1 16.3H23.2V16.3Q23.2 17.3 22.1 17.3H2.1Q1 17.3 1 16.3Z" fill="#e9b852"/></svg>
<svg class="abs" style="left:138.5px;top:435.5px" width="9" height="8" viewBox="0 0 9 8"><path d="M0.5 6.9H4.9M2.6 2.1L5.8 5.2M7.6 0.3V4.2" stroke="#2b88d8" stroke-width="1.25"/></svg>
<div class="abs rowtxt" style="top:439.2px">yyy</div>
<svg class="abs" style="left:109px;top:469.15px" width="25" height="25" viewBox="0 0 25 25"><path d="M5.8 0.9H17L22.7 6.6V22.1Q22.7 23.1 21.7 23.1H6.8Q5.8 23.1 5.8 22.1Z" fill="#fff" stroke="#9a9a9a" stroke-width="0.9"/><path d="M17 0.9V5.1Q17 6.6 18.5 6.6H22.7" fill="none" stroke="#9a9a9a" stroke-width="0.9"/><rect x="13" y="9.2" width="7" height="1.2" fill="#a9cdf0"/><rect x="13" y="11.8" width="7" height="1" fill="#3b8ad9"/><rect x="13" y="14.2" width="7" height="1.2" fill="#8aa7dc"/><rect x="13" y="16.8" width="7" height="1" fill="#2a4fa0"/><rect x="0.5" y="8" width="11.5" height="11.4" rx="1.2" fill="#185abd"/><text x="6.2" y="16.6" font-family="Liberation Sans" font-size="8" font-weight="bold" fill="#fff" text-anchor="middle">W</text></svg>
<div class="abs rowtxt" style="top:474.3px">6.docx</div>
<svg class="abs" style="left:109px;top:504.29999999999995px" width="25" height="25" viewBox="0 0 25 25"><path d="M5.8 0.9H17L22.7 6.6V22.1Q22.7 23.1 21.7 23.1H6.8Q5.8 23.1 5.8 22.1Z" fill="#fff" stroke="#9a9a9a" stroke-width="0.9"/><path d="M17 0.9V5.1Q17 6.6 18.5 6.6H22.7" fill="none" stroke="#9a9a9a" stroke-width="0.9"/><rect x="13" y="9.2" width="7" height="1.2" fill="#a9cdf0"/><rect x="13" y="11.8" width="7" height="1" fill="#3b8ad9"/><rect x="13" y="14.2" width="7" height="1.2" fill="#8aa7dc"/><rect x="13" y="16.8" width="7" height="1" fill="#2a4fa0"/><rect x="0.5" y="8" width="11.5" height="11.4" rx="1.2" fill="#185abd"/><text x="6.2" y="16.6" font-family="Liberation Sans" font-size="8" font-weight="bold" fill="#fff" text-anchor="middle">W</text></svg>
<div class="abs rowtxt" style="top:509.5px">7.docx</div>
<svg class="abs" style="left:110px;top:540.95px" width="22" height="22" viewBox="0 0 22 22"><rect x="0.6" y="0.4" width="20.8" height="20.6" rx="1.6" fill="#fff" stroke="#8f8f8f" stroke-width="0.9"/><path d="M8 6.4L15.3 11.1L8 15.3Z" fill="#c4314b"/></svg>
<svg class="abs" style="left:138.5px;top:540.95px" width="9" height="8" viewBox="0 0 9 8"><path d="M0.5 6.9H4.9M2.6 2.1L5.8 5.2M7.6 0.3V4.2" stroke="#2b88d8" stroke-width="1.25"/></svg>
<div class="abs rowtxt" style="top:544.7px;-webkit-text-stroke:0.35px #242424;color:#1a1a1a">IMG_8474.mov</div><div class="abs tbcard"></div><div class="abs" style="left:63px;top:112.5px;width:32px;height:25.5px;background:#f0f0f0;border-radius:4px"></div><svg class="abs" style="left:73px;top:123.5px" width="13" height="3" viewBox="0 0 13 3"><circle cx="1.5" cy="1.5" r="1.1" fill="#242424"/><circle cx="6.3" cy="1.5" r="1.1" fill="#242424"/><circle cx="11.1" cy="1.5" r="1.1" fill="#242424"/></svg>
<div class="abs selpill"></div>
<svg class="abs" style="left:110px;top:119.5px" width="11" height="11" viewBox="0 0 11 11"><path d="M0.8 0.8L10.2 10.2M10.2 0.8L0.8 10.2" stroke="#424242" stroke-width="1.1"/></svg>
<div class="abs seltxt">1 selected</div>
<div class="abs" style="left:205px;top:116px;width:1px;height:19px;background:#d1d1d1"></div>
<svg class="abs" style="left:220px;top:119px" width="15" height="13" viewBox="0 0 15 13"><path d="M0.8 1.1H9.9M0.8 6.2H13.5M0.8 11H9.1" stroke="#424242" stroke-width="1.1"/></svg>
<svg class="abs" style="left:241px;top:123px" width="8" height="6" viewBox="0 0 8 6"><path d="M0.8 1L4 4.4L7.2 1" fill="none" stroke="#424242" stroke-width="1.1"/></svg>
<svg class="abs" style="left:264.7px;top:119.5px" width="15" height="12" viewBox="0 0 15 12"><rect x="0.9" y="0.9" width="13.2" height="10" rx="1.8" fill="none" stroke="#424242" stroke-width="1.1"/><path d="M9.3 0.9V10.9" stroke="#424242" stroke-width="1.1"/><path d="M7.4 5.8H3.4M5 4.1L3.3 5.8L5 7.5" fill="none" stroke="#424242" stroke-width="1.1"/></svg><div class="abs menu"></div><svg class="abs" style="left:69px;top:141.5px" width="20" height="10" viewBox="0 0 20 10"><path d="M0.5 9.5L9.5 1Q10 0.6 10.5 1L19.5 9.5" fill="#fff" stroke="rgba(0,0,0,0.07)" stroke-width="1"/><rect x="0" y="9" width="20" height="1" fill="#fff"/></svg><svg class="abs" style="left:72.5px;top:161.6px" width="17" height="17" viewBox="0 0 16 16"><path d="M11.4 1.5L15 5L11.4 8.5M15 5H10.5Q6 5 5.3 9.8" fill="none" stroke="#424242" stroke-width="1.1" stroke-linejoin="round"/><path d="M6.5 2.8H3.5Q1.5 2.8 1.5 4.8V12.5Q1.5 14.5 3.5 14.5H11.3Q13.3 14.5 13.3 12.5V10.5" fill="none" stroke="#424242" stroke-width="1.1"/></svg><div class="abs mtxt" style="top:161.6px">Share</div><svg class="abs" style="left:72.5px;top:190.9px" width="17" height="17" viewBox="0 0 16 16"><path d="M1.5 3.3H14.5M5.8 3.3V2.3Q5.8 1 7 1H9Q10.2 1 10.2 2.3V3.3M3 3.3L3.8 13.3Q4 14.9 5.5 14.9H10.5Q12 14.9 12.2 13.3L13 3.3M6.3 6.4V11.7M9.7 6.4V11.7" fill="none" stroke="#424242" stroke-width="1.1"/></svg><div class="abs mtxt" style="top:190.9px">Delete</div><svg class="abs" style="left:72.5px;top:220.3px" width="17" height="17" viewBox="0 0 16 16"><path d="M8.5 13.5H2.6Q1.1 13.5 1.1 12V3Q1.1 1.5 2.6 1.5H5.6L7.2 3H13.4Q14.9 3 14.9 4.5V7.5M1.1 5.5H5.4L7.2 3.2" fill="none" stroke="#424242" stroke-width="1.1"/><circle cx="11.4" cy="11.2" r="4.2" fill="#424242" stroke="#fff" stroke-width="0.8"/><path d="M9.4 11.2H13.2M11.7 9.7L13.2 11.2L11.7 12.7" fill="none" stroke="#fff" stroke-width="1"/></svg><div class="abs mtxt" style="top:220.3px">Move to</div><svg class="abs" style="left:72.5px;top:249.6px" width="17" height="17" viewBox="0 0 16 16"><rect x="5.5" y="1" width="9" height="11" rx="2" fill="none" stroke="#424242" stroke-width="1.1"/><path d="M3.8 3.5Q1.6 4 1.6 6V12.8Q1.6 15 3.8 15H9.6Q11.6 15 12 13.2" fill="none" stroke="#424242" stroke-width="1.1"/></svg><div class="abs mtxt" style="top:249.6px">Copy to</div><svg class="abs" style="left:72.5px;top:278.9px" width="17" height="17" viewBox="0 0 16 16"><path d="M8 1V12M3.3 7.6L8 12.3L12.7 7.6M2 15H14" fill="none" stroke="#424242" stroke-width="1.1"/></svg><div class="abs mtxt" style="top:278.9px">Download</div><svg class="abs" style="left:72.5px;top:308.2px" width="17" height="17" viewBox="0 0 16 16"><path d="M9 3H3Q1.2 3 1.2 4.8V11.2Q1.2 13 3 13H9M13 3Q14.8 3 14.8 4.8V11.2Q14.8 13 13 13M4 8H8M11 1V15M9.3 1H12.7M9.3 15H12.7" fill="none" stroke="#424242" stroke-width="1.1"/></svg><div class="abs mtxt" style="top:308.2px">Rename</div><svg class="abs" style="left:72.5px;top:337.6px" width="17" height="17" viewBox="0 0 16 16"><path d="M8 2.5H13Q14.8 2.5 14.8 4.3V13.2Q14.8 15 13 15H4Q2.2 15 2.2 13.2V8.5M2.6 14.5L7.6 9.6Q8.4 8.9 9.2 9.6L14.4 14.6" fill="none" stroke="#424242" stroke-width="1.1"/><circle cx="11.3" cy="6.2" r="1.2" fill="#424242"/><circle cx="4.4" cy="4.4" r="4" fill="#424242"/><path d="M4.4 2.4V6.4M2.4 4.4H6.4" stroke="#fff" stroke-width="1.1"/></svg><div class="abs mtxt" style="top:337.6px">Add to album</div><svg class="abs" style="left:72.5px;top:366.9px" width="17" height="17" viewBox="0 0 16 16"><path d="M9.3 1.2H13.2Q14.8 1.2 14.8 2.8V6.7Q14.8 7.6 14.2 8.2L8.2 14.2Q7.1 15.3 6 14.2L1.8 10Q0.7 8.9 1.8 7.8L7.8 1.8Q8.4 1.2 9.3 1.2Z" fill="none" stroke="#424242" stroke-width="1.1"/><circle cx="11.3" cy="4.7" r="1" fill="#424242"/></svg><div class="abs mtxt" style="top:366.9px">Edit tags</div><svg class="abs" style="left:72.5px;top:396.2px" width="17" height="17" viewBox="0 0 16 16"><path d="M4.5 4L0.8 8L4.5 12M11.5 4L15.2 8L11.5 12M9.6 2.2L6.4 13.8" fill="none" stroke="#424242" stroke-width="1.1"/></svg><div class="abs mtxt" style="top:396.2px">Embed</div><svg class="abs" style="left:72.5px;top:425.6px" width="17" height="17" viewBox="0 0 16 16"><path d="M2.3 5.4A6.8 6.8 0 1 1 1.3 9.2M1.6 1.8V5.6H5.4M8 4.6V8.6H11" fill="none" stroke="#424242" stroke-width="1.1"/></svg><div class="abs mtxt" style="top:425.6px">Version history</div><svg class="abs" style="left:67.7px;top:154.2px" width="69.5" height="31.4" viewBox="0 0 69.5 31.4"><rect x="1.5" y="1.5" width="66.5" height="28.4" rx="0.3" fill="none" stroke="#ff0000" stroke-width="3" stroke-linecap="round" stroke-dasharray="5.4 6.5" stroke-dashoffset="3"/></svg><div class="abs" style="left:0;top:50px;width:317px;height:1px;background:#a9a9ab"></div><div class="abs" style="left:0;top:51px;width:317px;height:1px;background:#fdfdfd"></div><div class="abs" style="left:0;top:607px;width:317px;height:1px;background:#fdfdfd"></div></div></div><div class="bot">
<svg class="abs" style="left:10px;top:10px" width="22" height="17" viewBox="0 0 22 17"><path d="M20.5 8.5H2M9 1.2L1.7 8.5L9 15.8" fill="none" stroke="#f5f5f5" stroke-width="1.7"/></svg>
<svg class="abs" style="left:79px;top:10px" width="22" height="17" viewBox="0 0 22 17"><path d="M1.5 8.5H20M13 1.2L20.3 8.5L13 15.8" fill="none" stroke="#77797c" stroke-width="1.7"/></svg>
<div class="abs" style="left:144px;top:3.5px;width:29px;height:29px;border-radius:50%;background:#5c5f63"></div>
<svg class="abs" style="left:148.5px;top:8px" width="20" height="20" viewBox="0 0 20 20"><path d="M10 1.5V18.5M1.5 10H18.5" stroke="#f5f5f5" stroke-width="1.8"/></svg>
<div class="abs tabs">3</div>
<svg class="abs" style="left:280px;top:16px" width="21" height="5" viewBox="0 0 21 5"><circle cx="3" cy="2.5" r="1.9" fill="#f5f5f5"/><circle cx="10.6" cy="2.5" r="1.9" fill="#f5f5f5"/><circle cx="18.2" cy="2.5" r="1.9" fill="#f5f5f5"/></svg>
</div><div class="abs" style="left:0;top:49px;width:317px;height:1px;background:#26292b"></div><div class="abs" style="left:0;top:608px;width:317px;height:1px;background:#8a8b8d"></div><div class="abs" style="left:0;top:609px;width:317px;height:1px;background:#222427"></div></div><div class="panel" style="left:633.5px"><div class="top"><div class="pill"><svg class="abs" style="left:6px;top:21px" width="24" height="14" viewBox="0 0 24 14">
<circle cx="6.15" cy="6.6" r="3" fill="none" stroke="#f4f4f4" stroke-width="2.7"/>
<rect x="8.8" y="5.3" width="12.3" height="2.7" fill="#f4f4f4"/>
<rect x="15.6" y="6" width="2.3" height="4.2" fill="#f4f4f4"/>
<rect x="18.8" y="6" width="2.3" height="4.2" fill="#f4f4f4"/>
</svg><div class="url">onedrive.live.com</div><svg class="abs" style="left:287px;top:19px" width="17" height="18" viewBox="0 0 17 18">
<path d="M5.5 7.5H3.5Q2.5 7.5 2.5 8.5V15.5Q2.5 16.5 3.5 16.5H13.5Q14.5 16.5 14.5 15.5V8.5Q14.5 7.5 13.5 7.5H11.5" fill="none" stroke="#e6e6e6" stroke-width="1.3"/>
<path d="M8.5 11.5V1.8M5.7 4.4L8.5 1.6L11.3 4.4" fill="none" stroke="#e6e6e6" stroke-width="1.3"/>
</svg></div></div><div class="page"><div class="inner"><svg class="abs" style="left:7.6px;top:63.5px" width="13" height="13" viewBox="0 0 13 13"><circle cx="0.80" cy="1.20" r="1.2" fill="#323130"/><circle cx="5.95" cy="1.20" r="1.2" fill="#323130"/><circle cx="11.10" cy="1.20" r="1.2" fill="#323130"/><circle cx="0.80" cy="6.00" r="1.2" fill="#323130"/><circle cx="5.95" cy="6.00" r="1.2" fill="#323130"/><circle cx="11.10" cy="6.00" r="1.2" fill="#323130"/><circle cx="0.80" cy="10.80" r="1.2" fill="#323130"/><circle cx="5.95" cy="10.80" r="1.2" fill="#323130"/><circle cx="11.10" cy="10.80" r="1.2" fill="#323130"/></svg>
<div class="abs od">OneDrive</div>
<svg class="abs" style="left:178px;top:62px" width="16" height="16" viewBox="0 0 16 16"><circle cx="9.5" cy="6" r="4.2" fill="none" stroke="#424242" stroke-width="1.15"/><path d="M6.5 9L1.3 14.3" stroke="#424242" stroke-width="1.2"/></svg>
<svg class="abs" style="left:217px;top:62px" width="16" height="16" viewBox="0 0 16 16"><circle cx="5.2" cy="6.3" r="2.2" fill="none" stroke="#424242" stroke-width="1.1"/><path d="M1.3 10.2H9.3Q9.6 10.2 9.6 10.5Q9.4 14.3 5.3 14.3Q1.2 14.3 1 10.5Q1 10.2 1.3 10.2Z" fill="none" stroke="#424242" stroke-width="1.1"/><path d="M9.3 1.6H13.6Q14.3 1.6 14.3 2.3V4.9Q14.3 5.6 13.6 5.6H11.2L9.4 7.3V5.6Q8.6 5.6 8.6 4.9V2.3Q8.6 1.6 9.3 1.6Z" fill="none" stroke="#424242" stroke-width="1.1"/></svg>
<svg class="abs" style="left:257.3px;top:69px" width="14" height="3" viewBox="0 0 14 3"><circle cx="1.5" cy="1.5" r="1" fill="#424242"/><circle cx="6.6" cy="1.5" r="1" fill="#424242"/><circle cx="11.7" cy="1.5" r="1" fill="#424242"/></svg>
<div class="abs avatar">JL</div><div class="abs fab"><svg width="29.4" height="29.4" viewBox="0 0 29.4 29.4"><path d="M14.7 9.2V20.2M9.2 14.7H20.2" stroke="#fff" stroke-width="1.9"/></svg></div>
<svg class="abs" style="left:14px;top:165px" width="16" height="12" viewBox="0 0 16 12"><rect x="1" y="1" width="13.5" height="9.8" rx="1.8" fill="none" stroke="#424242" stroke-width="1.1"/><path d="M5.3 1V10.8" stroke="#424242" stroke-width="1.1"/><path d="M7.6 6H11.6M9.9 4.2L11.7 6L9.9 7.8" fill="none" stroke="#424242" stroke-width="1.1"/></svg>
<svg class="abs" style="left:15px;top:192.5px" width="14" height="15" viewBox="0 0 14 15"><path d="M1.5 13.3V6.6Q1.5 5.9 2 5.4L6.2 1.9Q7 1.3 7.8 1.9L12 5.4Q12.5 5.9 12.5 6.6V13.3H9.1V9.6Q9.1 8.3 7 8.3Q4.9 8.3 4.9 9.6V13.3Z" fill="none" stroke="#424242" stroke-width="1.1" stroke-linejoin="round"/></svg>
<svg class="abs" style="left:15px;top:224px" width="15" height="12" viewBox="0 0 15 12"><path d="M0.5 1.3Q0.5 0.3 1.5 0.3H5L6.6 1.8H13.3Q14.3 1.8 14.3 2.8V10.4Q14.3 11.4 13.3 11.4H1.5Q0.5 11.4 0.5 10.4Z" fill="#185abd"/><path d="M0.8 3.6H5.4L6.8 2.4" stroke="#a8c5ef" stroke-width="0.8" fill="none"/></svg>
<svg class="abs" style="left:15px;top:253px" width="14" height="14" viewBox="0 0 14 14"><rect x="1" y="1" width="11.8" height="11.8" rx="2" fill="none" stroke="#424242" stroke-width="1.1"/><path d="M1.4 11.5L5.6 7.6Q6.6 6.8 7.6 7.6L12.4 11.8" fill="none" stroke="#424242" stroke-width="1.1"/><circle cx="9.4" cy="4.3" r="1.1" fill="#424242"/></svg>
<svg class="abs" style="left:14.5px;top:282px" width="16" height="14" viewBox="0 0 16 14"><circle cx="5" cy="3.4" r="2.5" fill="none" stroke="#424242" stroke-width="1.1"/><path d="M1.1 8.3H8.9Q9.3 8.3 9.3 8.7Q9.1 12.7 5 12.7Q0.9 12.7 0.7 8.7Q0.7 8.3 1.1 8.3Z" fill="none" stroke="#424242" stroke-width="1.1"/><circle cx="12" cy="5.4" r="1.8" fill="none" stroke="#424242" stroke-width="1.1"/><path d="M10.4 12.4Q14.8 12.6 14.9 10.2Q14.9 9.4 14.2 9.4H10.6" fill="none" stroke="#424242" stroke-width="1.1"/></svg>
<svg class="abs" style="left:15.5px;top:310.5px" width="14" height="15" viewBox="0 0 14 15"><path d="M1 3.3H13M4.8 3.3V2.2Q4.8 1 6 1H8Q9.2 1 9.2 2.2V3.3M2.4 3.3L3.2 12.4Q3.4 13.9 4.9 13.9H9.1Q10.6 13.9 10.8 12.4L11.6 3.3M5.6 6V11M8.4 6V11" fill="none" stroke="#424242" stroke-width="1.1"/></svg>
<div class="abs" style="left:12.5px;top:348.5px;width:19px;height:1px;background:#d6d6da"></div>
<svg class="abs" style="left:15px;top:376px" width="14" height="15" viewBox="0 0 14 15"><circle cx="7" cy="4" r="2.9" fill="none" stroke="#424242" stroke-width="1.1"/><path d="M1.6 8.9H12.4Q12.9 8.9 12.9 9.4Q12.6 13.9 7 13.9Q1.4 13.9 1.1 9.4Q1.1 8.9 1.6 8.9Z" fill="none" stroke="#424242" stroke-width="1.1"/></svg>
<div class="abs diamond"></div>
<svg class="abs" style="left:15px;top:544px" width="15" height="15" viewBox="0 0 15 15"><path d="M4.3 1.5H10.7L13.7 5.2L7.5 13.4L1.3 5.2Z M1.3 5.2H13.7 M5.5 5.2L7.5 13.4L9.5 5.2 M4.3 1.5L5.5 5.2L7.5 1.8L9.5 5.2L10.7 1.5" fill="none" stroke="#185abd" stroke-width="1" stroke-linejoin="round"/></svg>
<div class="abs" style="left:4.2px;top:577.7px;width:35.8px;height:1.4px;background:#cdcdd0;border-radius:1px"></div>
<div class="abs" style="left:4.2px;top:577.4px;width:7.6px;height:2px;background:#1f6fd0;border-radius:1px"></div><div class="abs listcard"></div>
<div class="abs" style="left:67px;top:151px;width:250px;height:31px;background:#f3f3f3;border-radius:0 0 0 6px"></div>
<div class="abs" style="left:79px;top:158px;width:14.6px;height:14.6px;border:1.3px solid #424242;border-radius:50%"></div>
<div class="abs selrow" style="background:#e9f1f9"></div>
<div class="abs check"><svg width="15" height="15" viewBox="0 0 15 15"><circle cx="7.5" cy="7.5" r="7" fill="#0f6cbd" stroke="#fff" stroke-width="0.9"/><path d="M4.6 7.7L6.6 9.6L10.4 5.6" fill="none" stroke="#fff" stroke-width="1.3"/></svg></div>
<svg class="abs" style="left:109px;top:156.70000000000002px" width="25" height="18" viewBox="0 0 25 18"><path d="M1 2.3Q1 1 2.3 1H9.3Q10.2 1 10.8 1.8L11.3 2.6H22.2Q23.2 2.6 23.2 3.6V15.9Q23.2 17.2 22 17.2H2.2Q1 17.2 1 16Z" fill="#fdd66b"/><path d="M1 2.3Q1 1 2.3 1H9.3Q10.2 1 10.8 1.8L11.6 3H1Z" fill="#ffb700"/><path d="M1 16.3H23.2V16.3Q23.2 17.3 22.1 17.3H2.1Q1 17.3 1 16.3Z" fill="#e9b852"/></svg>
<svg class="abs" style="left:138.5px;top:154.3px" width="9" height="8" viewBox="0 0 9 8"><path d="M0.5 6.9H4.9M2.6 2.1L5.8 5.2M7.6 0.3V4.2" stroke="#2b88d8" stroke-width="1.25"/></svg>
<div class="abs rowtxt" style="top:158.0px">Evernote</div>
<svg class="abs" style="left:109px;top:191.85000000000002px" width="25" height="18" viewBox="0 0 25 18"><path d="M1 2.3Q1 1 2.3 1H9.3Q10.2 1 10.8 1.8L11.3 2.6H22.2Q23.2 2.6 23.2 3.6V15.9Q23.2 17.2 22 17.2H2.2Q1 17.2 1 16Z" fill="#fdd66b"/><path d="M1 2.3Q1 1 2.3 1H9.3Q10.2 1 10.8 1.8L11.6 3H1Z" fill="#ffb700"/><path d="M1 16.3H23.2V16.3Q23.2 17.3 22.1 17.3H2.1Q1 17.3 1 16.3Z" fill="#e9b852"/></svg>
<div class="abs rowtxt" style="top:193.2px">MultCloud Cloud Backup</div>
<svg class="abs" style="left:109px;top:227.00000000000003px" width="25" height="18" viewBox="0 0 25 18"><path d="M1 2.3Q1 1 2.3 1H9.3Q10.2 1 10.8 1.8L11.3 2.6H22.2Q23.2 2.6 23.2 3.6V15.9Q23.2 17.2 22 17.2H2.2Q1 17.2 1 16Z" fill="#fdd66b"/><path d="M1 2.3Q1 1 2.3 1H9.3Q10.2 1 10.8 1.8L11.6 3H1Z" fill="#ffb700"/><path d="M1 16.3H23.2V16.3Q23.2 17.3 22.1 17.3H2.1Q1 17.3 1 16.3Z" fill="#e9b852"/></svg>
<svg class="abs" style="left:138.5px;top:224.60000000000002px" width="9" height="8" viewBox="0 0 9 8"><path d="M0.5 6.9H4.9M2.6 2.1L5.8 5.2M7.6 0.3V4.2" stroke="#2b88d8" stroke-width="1.25"/></svg>
<div class="abs rowtxt" style="top:228.3px">New Folder</div>
<svg class="abs" style="left:109px;top:262.15px" width="25" height="18" viewBox="0 0 25 18"><path d="M1 2.3Q1 1 2.3 1H9.3Q10.2 1 10.8 1.8L11.3 2.6H22.2Q23.2 2.6 23.2 3.6V15.9Q23.2 17.2 22 17.2H2.2Q1 17.2 1 16Z" fill="#fdd66b"/><path d="M1 2.3Q1 1 2.3 1H9.3Q10.2 1 10.8 1.8L11.6 3H1Z" fill="#ffb700"/><path d="M1 16.3H23.2V16.3Q23.2 17.3 22.1 17.3H2.1Q1 17.3 1 16.3Z" fill="#e9b852"/></svg>
<svg class="abs" style="left:138.5px;top:259.75px" width="9" height="8" viewBox="0 0 9 8"><path d="M0.5 6.9H4.9M2.6 2.1L5.8 5.2M7.6 0.3V4.2" stroke="#2b88d8" stroke-width="1.25"/></svg>
<div class="abs rowtxt" style="top:263.4px">New Folder(1)</div>
<svg class="abs" style="left:109px;top:297.29999999999995px" width="25" height="18" viewBox="0 0 25 18"><path d="M1 2.3Q1 1 2.3 1H9.3Q10.2 1 10.8 1.8L11.3 2.6H22.2Q23.2 2.6 23.2 3.6V15.9Q23.2 17.2 22 17.2H2.2Q1 17.2 1 16Z" fill="#fdd66b"/><path d="M1 2.3Q1 1 2.3 1H9.3Q10.2 1 10.8 1.8L11.6 3H1Z" fill="#ffb700"/><path d="M1 16.3H23.2V16.3Q23.2 17.3 22.1 17.3H2.1Q1 17.3 1 16.3Z" fill="#e9b852"/></svg>
<svg class="abs" style="left:138.5px;top:294.9px" width="9" height="8" viewBox="0 0 9 8"><path d="M0.5 6.9H4.9M2.6 2.1L5.8 5.2M7.6 0.3V4.2" stroke="#2b88d8" stroke-width="1.25"/></svg>
<div class="abs rowtxt" style="top:298.6px">New Folder(2)</div>
<svg class="abs" style="left:109px;top:331.55px" width="25" height="19" viewBox="0 0 25 19"><rect x="0.6" y="0.6" width="23.2" height="15.2" rx="0.8" fill="#b1b1b1"/><rect x="2.5" y="2.5" width="19.4" height="11.4" fill="#c7c7c7" stroke="#a0a0a0" stroke-width="0.8"/><rect x="4.4" y="4.5" width="1.5" height="7.2" fill="#8c8c8c"/><circle cx="12" cy="8.1" r="3" fill="none" stroke="#8c8c8c" stroke-width="1.3"/><rect x="18.3" y="4.3" width="3.4" height="1.5" fill="#8c8c8c"/><rect x="18.3" y="10.4" width="3.4" height="1.5" fill="#8c8c8c"/><rect x="2.5" y="15.6" width="3.8" height="1.8" rx="0.8" fill="#9a9a9a"/><rect x="18.2" y="15.6" width="3.8" height="1.8" rx="0.8" fill="#9a9a9a"/></svg>
<div class="abs rowtxt" style="top:333.8px">Personal Vault</div>
<svg class="abs" style="left:109px;top:367.59999999999997px" width="25" height="18" viewBox="0 0 25 18"><path d="M1 2.3Q1 1 2.3 1H9.3Q10.2 1 10.8 1.8L11.3 2.6H22.2Q23.2 2.6 23.2 3.6V15.9Q23.2 17.2 22 17.2H2.2Q1 17.2 1 16Z" fill="#fdd66b"/><path d="M1 2.3Q1 1 2.3 1H9.3Q10.2 1 10.8 1.8L11.6 3H1Z" fill="#ffb700"/><path d="M1 16.3H23.2V16.3Q23.2 17.3 22.1 17.3H2.1Q1 17.3 1 16.3Z" fill="#e9b852"/></svg>
<svg class="abs" style="left:138.5px;top:365.2px" width="9" height="8" viewBox="0 0 9 8"><path d="M0.5 6.9H4.9M2.6 2.1L5.8 5.2M7.6 0.3V4.2" stroke="#2b88d8" stroke-width="1.25"/></svg>
<div class="abs rowtxt" style="top:368.9px">Pictures</div>
<svg class="abs" style="left:109px;top:402.75px" width="25" height="18" viewBox="0 0 25 18"><path d="M1 2.3Q1 1 2.3 1H9.3Q10.2 1 10.8 1.8L11.3 2.6H22.2Q23.2 2.6 23.2 3.6V15.9Q23.2 17.2 22 17.2H2.2Q1 17.2 1 16Z" fill="#fdd66b"/><path d="M1 2.3Q1 1 2.3 1H9.3Q10.2 1 10.8 1.8L11.6 3H1Z" fill="#ffb700"/><path d="M1 16.3H23.2V16.3Q23.2 17.3 22.1 17.3H2.1Q1 17.3 1 16.3Z" fill="#e9b852"/></svg>
<svg class="abs" style="left:138.5px;top:400.35px" width="9" height="8" viewBox="0 0 9 8"><path d="M0.5 6.9H4.9M2.6 2.1L5.8 5.2M7.6 0.3V4.2" stroke="#2b88d8" stroke-width="1.25"/></svg>
<div class="abs rowtxt" style="top:404.1px">sql</div>
<svg class="abs" style="left:109px;top:437.9px" width="25" height="18" viewBox="0 0 25 18"><path d="M1 2.3Q1 1 2.3 1H9.3Q10.2 1 10.8 1.8L11.3 2.6H22.2Q23.2 2.6 23.2 3.6V15.9Q23.2 17.2 22 17.2H2.2Q1 17.2 1 16Z" fill="#fdd66b"/><path d="M1 2.3Q1 1 2.3 1H9.3Q10.2 1 10.8 1.8L11.6 3H1Z" fill="#ffb700"/><path d="M1 16.3H23.2V16.3Q23.2 17.3 22.1 17.3H2.1Q1 17.3 1 16.3Z" fill="#e9b852"/></svg>
<svg class="abs" style="left:138.5px;top:435.5px" width="9" height="8" viewBox="0 0 9 8"><path d="M0.5 6.9H4.9M2.6 2.1L5.8 5.2M7.6 0.3V4.2" stroke="#2b88d8" stroke-width="1.25"/></svg>
<div class="abs rowtxt" style="top:439.2px">yyy</div>
<svg class="abs" style="left:109px;top:469.15px" width="25" height="25" viewBox="0 0 25 25"><path d="M5.8 0.9H17L22.7 6.6V22.1Q22.7 23.1 21.7 23.1H6.8Q5.8 23.1 5.8 22.1Z" fill="#fff" stroke="#9a9a9a" stroke-width="0.9"/><path d="M17 0.9V5.1Q17 6.6 18.5 6.6H22.7" fill="none" stroke="#9a9a9a" stroke-width="0.9"/><rect x="13" y="9.2" width="7" height="1.2" fill="#a9cdf0"/><rect x="13" y="11.8" width="7" height="1" fill="#3b8ad9"/><rect x="13" y="14.2" width="7" height="1.2" fill="#8aa7dc"/><rect x="13" y="16.8" width="7" height="1" fill="#2a4fa0"/><rect x="0.5" y="8" width="11.5" height="11.4" rx="1.2" fill="#185abd"/><text x="6.2" y="16.6" font-family="Liberation Sans" font-size="8" font-weight="bold" fill="#fff" text-anchor="middle">W</text></svg>
<div class="abs rowtxt" style="top:474.3px">6.docx</div>
<svg class="abs" style="left:109px;top:504.29999999999995px" width="25" height="25" viewBox="0 0 25 25"><path d="M5.8 0.9H17L22.7 6.6V22.1Q22.7 23.1 21.7 23.1H6.8Q5.8 23.1 5.8 22.1Z" fill="#fff" stroke="#9a9a9a" stroke-width="0.9"/><path d="M17 0.9V5.1Q17 6.6 18.5 6.6H22.7" fill="none" stroke="#9a9a9a" stroke-width="0.9"/><rect x="13" y="9.2" width="7" height="1.2" fill="#a9cdf0"/><rect x="13" y="11.8" width="7" height="1" fill="#3b8ad9"/><rect x="13" y="14.2" width="7" height="1.2" fill="#8aa7dc"/><rect x="13" y="16.8" width="7" height="1" fill="#2a4fa0"/><rect x="0.5" y="8" width="11.5" height="11.4" rx="1.2" fill="#185abd"/><text x="6.2" y="16.6" font-family="Liberation Sans" font-size="8" font-weight="bold" fill="#fff" text-anchor="middle">W</text></svg>
<div class="abs rowtxt" style="top:509.5px">7.docx</div>
<svg class="abs" style="left:110px;top:540.95px" width="22" height="22" viewBox="0 0 22 22"><rect x="0.6" y="0.4" width="20.8" height="20.6" rx="1.6" fill="#fff" stroke="#8f8f8f" stroke-width="0.9"/><path d="M8 6.4L15.3 11.1L8 15.3Z" fill="#c4314b"/></svg>
<svg class="abs" style="left:138.5px;top:540.95px" width="9" height="8" viewBox="0 0 9 8"><path d="M0.5 6.9H4.9M2.6 2.1L5.8 5.2M7.6 0.3V4.2" stroke="#2b88d8" stroke-width="1.25"/></svg>
<div class="abs rowtxt" style="top:544.7px;-webkit-text-stroke:0.35px #242424;color:#1a1a1a">IMG_8474.mov</div><div class="abs tbcard"></div><svg class="abs" style="left:73px;top:123.5px" width="13" height="3" viewBox="0 0 13 3"><circle cx="1.5" cy="1.5" r="1.1" fill="#242424"/><circle cx="6.3" cy="1.5" r="1.1" fill="#242424"/><circle cx="11.1" cy="1.5" r="1.1" fill="#242424"/></svg>
<div class="abs selpill"></div>
<svg class="abs" style="left:110px;top:119.5px" width="11" height="11" viewBox="0 0 11 11"><path d="M0.8 0.8L10.2 10.2M10.2 0.8L0.8 10.2" stroke="#424242" stroke-width="1.1"/></svg>
<div class="abs seltxt">1 selected</div>
<div class="abs" style="left:205px;top:116px;width:1px;height:19px;background:#d1d1d1"></div>
<svg class="abs" style="left:220px;top:119px" width="15" height="13" viewBox="0 0 15 13"><path d="M0.8 1.1H9.9M0.8 6.2H13.5M0.8 11H9.1" stroke="#424242" stroke-width="1.1"/></svg>
<svg class="abs" style="left:241px;top:123px" width="8" height="6" viewBox="0 0 8 6"><path d="M0.8 1L4 4.4L7.2 1" fill="none" stroke="#424242" stroke-width="1.1"/></svg>
<svg class="abs" style="left:264.7px;top:119.5px" width="15" height="12" viewBox="0 0 15 12"><rect x="0.9" y="0.9" width="13.2" height="10" rx="1.8" fill="none" stroke="#424242" stroke-width="1.1"/><path d="M9.3 0.9V10.9" stroke="#424242" stroke-width="1.1"/><path d="M7.4 5.8H3.4M5 4.1L3.3 5.8L5 7.5" fill="none" stroke="#424242" stroke-width="1.1"/></svg><div class="abs" style="left:0;top:50px;width:317px;height:1px;background:#a9a9ab"></div><div class="abs" style="left:0;top:51px;width:317px;height:1px;background:#fdfdfd"></div><div class="abs" style="left:0;top:607px;width:317px;height:1px;background:#fdfdfd"></div></div><div class="abs overlay"></div><div class="abs dlg">
<div class="abs dtitle">Share "IMG_8474.mov"</div>
<svg class="abs" style="left:224px;top:19px" width="17" height="17" viewBox="0 0 17 17"><path d="M6.72 3.20 L7.16 1.42 L9.64 1.42 L10.08 3.20 L11.55 4.05 L13.31 3.54 L14.55 5.68 L13.23 6.95 L13.23 8.65 L14.55 9.92 L13.31 12.06 L11.55 11.55 L10.08 12.40 L9.64 14.18 L7.16 14.18 L6.72 12.40 L5.25 11.55 L3.49 12.06 L2.25 9.92 L3.57 8.65 L3.57 6.95 L2.25 5.68 L3.49 3.54 L5.25 4.05Z" fill="none" stroke="#424242" stroke-width="1" stroke-linejoin="round"/><circle cx="8.4" cy="7.8" r="2" fill="none" stroke="#424242" stroke-width="1"/></svg>
<svg class="abs" style="left:255px;top:20px" width="14" height="14" viewBox="0 0 14 14"><path d="M2.5 1.9L12 11.1M12 1.9L2.5 11.1" stroke="#424242" stroke-width="1"/></svg>
<div class="abs dinput"></div>
<div class="abs" style="left:213.5px;top:51.2px;width:1px;height:34.5px;background:#d6d6d6"></div>
<svg class="abs" style="left:24px;top:61px" width="12" height="14" viewBox="0 0 12 14"><circle cx="6" cy="4" r="2.6" fill="none" stroke="#616161" stroke-width="1"/><path d="M1.6 8.4H10.4Q10.9 8.4 10.9 8.9Q10.6 12.9 6 12.9Q1.4 12.9 1.1 8.9Q1.1 8.4 1.6 8.4Z" fill="none" stroke="#616161" stroke-width="1"/></svg>
<div class="abs dph" style="left:43.5px;top:59.8px;font-size:14px">Add a name, group, or</div>
<svg class="abs" style="left:226.3px;top:60.5px" width="16" height="16" viewBox="0 0 17 17"><path d="M11.4 1.9Q12.6 0.7 13.8 1.9L15 3.1Q16.2 4.3 15 5.5L5.6 14.9L1.3 15.8L2.2 11.5Z M10 3.3L13.6 6.9" fill="none" stroke="#424242" stroke-width="1.1" stroke-linejoin="round"/></svg>
<svg class="abs" style="left:249px;top:64.5px" width="12" height="8" viewBox="0 0 12 8"><path d="M1 1.2L6 6.2L11 1.2" fill="none" stroke="#424242" stroke-width="1.2"/></svg>
<div class="abs dmsg"></div>
<svg class="abs" style="left:24px;top:109px" width="16" height="14" viewBox="0 0 16 14"><rect x="0.9" y="2.6" width="13.2" height="9.8" rx="1.8" fill="none" stroke="#616161" stroke-width="1"/><path d="M4.4 9.2L4.8 7.4L9.6 2.6Q10.5 1.7 11.4 2.6Q12.3 3.5 11.4 4.4L6.6 9.2Z" fill="#fff" stroke="#616161" stroke-width="1" stroke-linejoin="round"/></svg>
<div class="abs dph" style="left:45.5px;top:110px;font-size:13.5px">Add a message</div>
<div class="abs" style="left:14px;top:193px;font-size:14px;color:#242424;white-space:nowrap">Anyone with the link can edit.</div>
<div class="abs" style="left:15.5px;top:215.5px;width:21px;height:21px;border-radius:50%;background:#e6e6e6"></div>
<svg class="abs" style="left:20px;top:219px" width="12" height="14" viewBox="0 0 12 14"><rect x="2" y="6" width="8" height="6.5" rx="1.2" fill="none" stroke="#757575" stroke-width="1"/><path d="M3.8 6V4.2Q3.8 2 6 2Q8.2 2 8.2 4.2V6" fill="none" stroke="#757575" stroke-width="1"/><circle cx="6" cy="9.2" r="0.8" fill="#757575"/></svg>
<div class="abs copybtn"></div>
<svg class="abs" style="left:106px;top:217px" width="16" height="16" viewBox="0 0 16 16"><path d="M6.5 4.5H4.5Q1 4.5 1 8Q1 11.5 4.5 11.5H6.5M9.5 4.5H11.5Q15 4.5 15 8Q15 11.5 11.5 11.5H9.5M5 8H11" fill="none" stroke="#0f6cbd" stroke-width="1.2"/></svg>
<div class="abs" style="left:123.6px;top:217.8px;font-size:14px;color:#1470c4;white-space:nowrap">Copy link</div>
<div class="abs sendbtn"></div>
<svg class="abs" style="left:213.5px;top:217.5px" width="15" height="15" viewBox="0 0 15 15"><path d="M1.3 1.5L14 7.5L1.3 13.5L3.2 7.5Z M3.2 7.5H8" fill="none" stroke="#fff" stroke-width="1.1" stroke-linejoin="round"/></svg>
<div class="abs" style="left:230.3px;top:217.2px;font-size:14px;color:#fff;white-space:nowrap">Send</div>
</div></div><div class="bot">
<svg class="abs" style="left:10px;top:10px" width="22" height="17" viewBox="0 0 22 17"><path d="M20.5 8.5H2M9 1.2L1.7 8.5L9 15.8" fill="none" stroke="#f5f5f5" stroke-width="1.7"/></svg>
<svg class="abs" style="left:79px;top:10px" width="22" height="17" viewBox="0 0 22 17"><path d="M1.5 8.5H20M13 1.2L20.3 8.5L13 15.8" fill="none" stroke="#77797c" stroke-width="1.7"/></svg>
<div class="abs" style="left:144px;top:3.5px;width:29px;height:29px;border-radius:50%;background:#5c5f63"></div>
<svg class="abs" style="left:148.5px;top:8px" width="20" height="20" viewBox="0 0 20 20"><path d="M10 1.5V18.5M1.5 10H18.5" stroke="#f5f5f5" stroke-width="1.8"/></svg>
<div class="abs tabs">3</div>
<svg class="abs" style="left:280px;top:16px" width="21" height="5" viewBox="0 0 21 5"><circle cx="3" cy="2.5" r="1.9" fill="#f5f5f5"/><circle cx="10.6" cy="2.5" r="1.9" fill="#f5f5f5"/><circle cx="18.2" cy="2.5" r="1.9" fill="#f5f5f5"/></svg>
</div><div class="abs" style="left:0;top:49px;width:317px;height:1px;background:#26292b"></div><div class="abs" style="left:0;top:608px;width:317px;height:1px;background:#8a8b8d"></div><div class="abs" style="left:0;top:609px;width:317px;height:1px;background:#222427"></div></div></body></html>
